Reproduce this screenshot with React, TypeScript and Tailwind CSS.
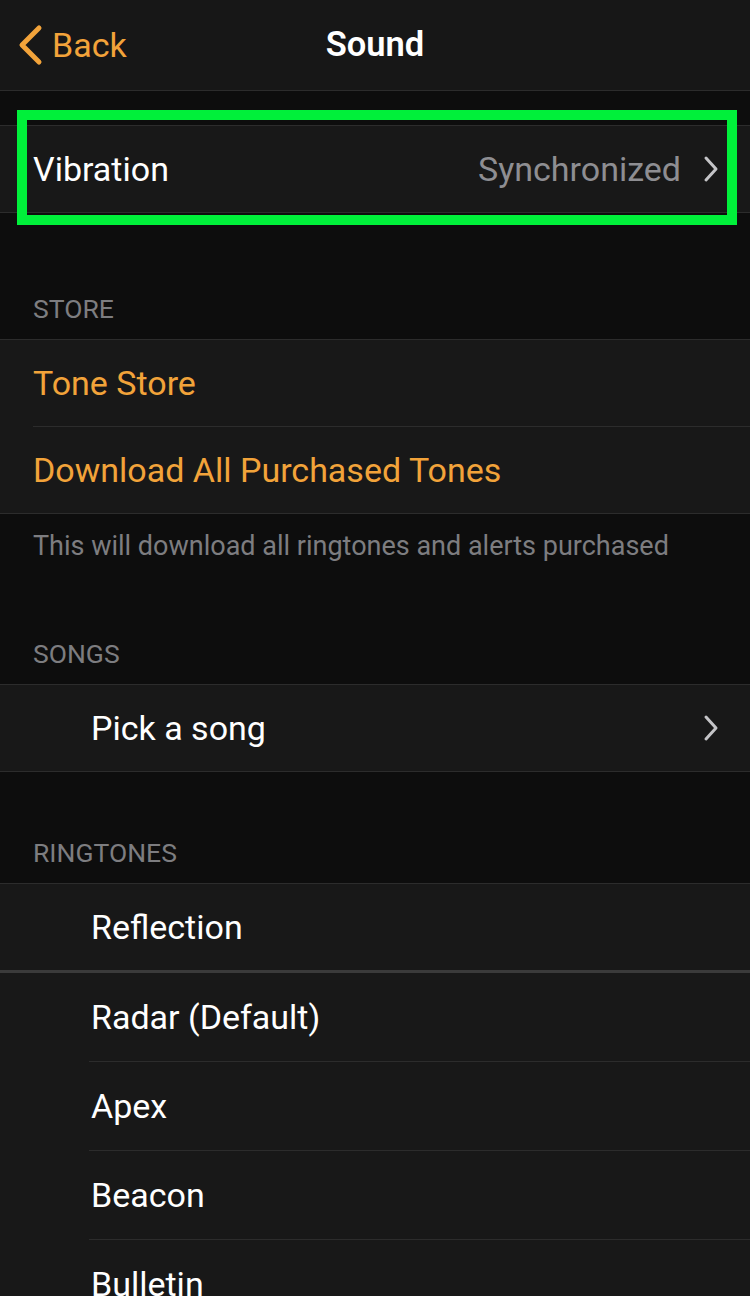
import React from 'react';

const font = { fontFamily: 'Roboto, "Liberation Sans", sans-serif' };

function Chevron() {
  return (
    <svg width="16" height="28" viewBox="0 0 16 28" fill="none" className="shrink-0">
      <path d="M3 3l10 11L3 25" stroke="#c4c4c7" strokeWidth="3" strokeLinecap="round" strokeLinejoin="round" />
    </svg>
  );
}

function SectionHeader({ label, className }: { label: string; className: string }) {
  return (
    <div className={`flex items-end px-[33px] text-[26.5px] uppercase leading-none text-[#7d7d80] ${className}`}>
      {label}
    </div>
  );
}

export default function App() {
  const ringtones = ['Radar (Default)', 'Apex', 'Beacon', 'Bulletin'];

  return (
    <div className="h-[1296px] w-[750px] overflow-hidden bg-[#0d0d0d] text-white" style={font}>
      {/* nav */}
      <div className="relative flex h-[91px] items-center border-b border-[#2c2c2c] bg-[#171717]">
        <div className="flex items-center gap-[9px] pl-[17px] text-[#f2a33a]">
          <svg width="26" height="42" viewBox="0 0 26 42" fill="none">
            <path d="M22 4L5 21l17 17" stroke="#f2a33a" strokeWidth="5" strokeLinecap="round" strokeLinejoin="round" />
          </svg>
          <span className="text-[34px]">Back</span>
        </div>
        <div className="absolute left-0 right-0 top-0 flex h-[90px] items-center justify-center text-[34.5px] font-semibold">
          Sound
        </div>
      </div>

      <div className="h-[34px]" />

      {/* vibration */}
      <div className="relative border-y border-[#2c2c2c] bg-[#181818]">
        <div className="flex h-[86px] items-center justify-between pl-[33px] pr-[31px]">
          <span className="text-[34px]">Vibration</span>
          <div className="flex items-center gap-[22px]">
            <span className="text-[34px] text-[#8e8e92]">Synchronized</span>
            <Chevron />
          </div>
        </div>
        <div className="pointer-events-none absolute left-[17px] top-[-16px] h-[115px] w-[720px] border-[10px] border-[#00f03a]" />
      </div>

      <SectionHeader label="Store" className="h-[126px] pb-[17px]" />

      <div className="border-y border-[#2c2c2c] bg-[#181818]">
        <div className="flex h-[86px] items-center px-[33px] text-[34px] text-[#f2a33a]">Tone Store</div>
        <div className="ml-[33px] h-px bg-[#2c2c2c]" />
        <div className="flex h-[86px] items-center px-[33px] text-[34px] text-[#f2a33a]">Download All Purchased Tones</div>
      </div>

      <div className="px-[33px] pt-[19px] text-[27px] leading-none text-[#7d7d80]">
        This will download all ringtones and alerts purchased
      </div>

      <SectionHeader label="Songs" className="h-[124px] pb-[17px]" />

      <div className="border-y border-[#2c2c2c] bg-[#181818]">
        <div className="flex h-[86px] items-center justify-between pl-[91px] pr-[31px]">
          <span className="text-[34px]">Pick a song</span>
          <Chevron />
        </div>
      </div>

      <SectionHeader label="Ringtones" className="h-[111px] pb-[17px]" />

      <div className="border-t border-[#2c2c2c] bg-[#181818]">
        <div className="flex h-[86px] items-center pl-[91px] text-[34px]">Reflection</div>
        <div className="h-[3px] bg-[#3a3a3a]" />
        {ringtones.map((name, i) => (
          <div key={name}>
            {i > 0 && <div className="ml-[89px] h-px bg-[#2c2c2c]" />}
            <div className="flex h-[88px] items-center pl-[91px] text-[34px]">{name}</div>
          </div>
        ))}
      </div>
    </div>
  );
}
